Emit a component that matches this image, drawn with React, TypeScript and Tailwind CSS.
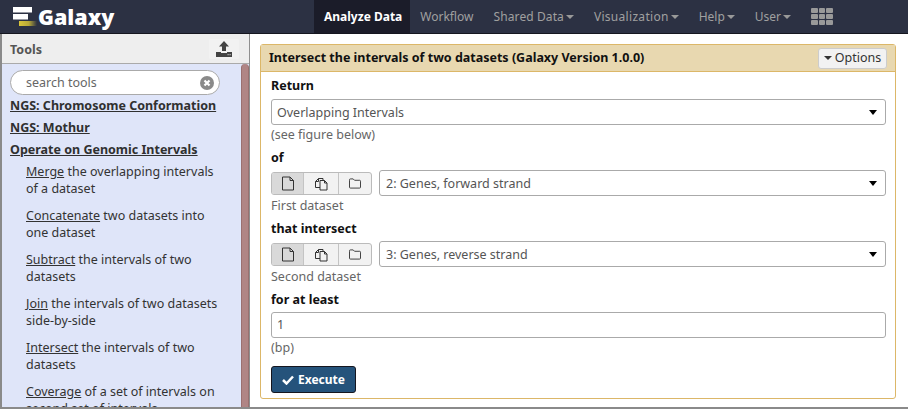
import React from "react";

const font = "font-['Noto_Sans',sans-serif]";

function Caret({ className = "border-t-[#8a8a8a]" }: { className?: string }) {
  return <span className={`inline-block w-0 h-0 border-x-[4px] border-x-transparent border-t-[4px] ${className}`} />;
}

function NavItem({ label, caret, active, labelClass = "" }: { label: string; caret?: boolean; active?: boolean; labelClass?: string }) {
  return (
    <div className={`h-full flex items-center ${active ? "pl-[10px] pr-[8px] bg-[#1b1c29] text-white font-bold" : "px-[10px] text-[#a0a0a0]"}`}>
      <span className={labelClass}>{label}</span>
      {caret && <Caret className="border-t-[#999999] mt-[1px] ml-[2px]" />}
    </div>
  );
}

function Tool({ link, rest }: { link: string; rest: React.ReactNode }) {
  return (
    <div className="pl-[16px] text-[12.5px] leading-[17px] text-[#333333] mb-[10px]">
      <span className="underline">{link}</span> {rest}
    </div>
  );
}

function Section({ children }: { children: React.ReactNode }) {
  return <div className="text-[12.5px] font-bold underline leading-[17px] text-[#303030] whitespace-nowrap">{children}</div>;
}

function DocIcon() {
  return (
    <svg width="12" height="15" viewBox="0 0 12 15" fill="none" stroke="#333" strokeWidth="1">
      <path d="M.5 1h7.500L11.500 4.500V14H.5z" strokeLinejoin="round" />
      <path d="M8 1v3.500h3.500" />
    </svg>
  );
}
function FilesIcon() {
  return (
    <svg width="14" height="14" viewBox="0 0 14 14" fill="none" stroke="#333" strokeWidth="1">
      <path d="M6 10.500H1.500V4.500L4.500 1.500H9V3.500" strokeLinejoin="round" />
      <path d="M4.500 1.500v3h-3" />
      <path d="M6 3.500h4.500L13 6v7H6z" strokeLinejoin="round" />
      <path d="M10.500 3.500V6H13" />
    </svg>
  );
}
function FolderIcon() {
  return (
    <svg width="14" height="11" viewBox="0 0 14 12" fill="none" stroke="#333" strokeWidth="1">
      <path d="M1 3V2q0-1 1-1h3l1.500 1.500H12q1 0 1 1V10q0 1-1 1H2q-1 0-1-1z" strokeLinejoin="round" />
    </svg>
  );
}

function SelectBox({ value, className = "" }: { value: string; className?: string }) {
  return (
    <div className={`h-[26px] border border-[#aaaaaa] rounded-[3px] bg-white flex items-center justify-between pl-[5px] pr-[8px] text-[#555555] text-[12.5px] ${className}`}>
      <span className="mt-[2px]">{value}</span>
      <Caret className="border-t-black border-x-[4.500px] border-t-[5px]" />
    </div>
  );
}

function DataRow({ value, hint }: { value: string; hint: string }) {
  return (
    <>
      <div className="flex gap-[7px] mt-[4px]">
        <div className="flex h-[23px] w-[101px] mt-[2px] border border-[#bbbbbb] rounded-[3px] overflow-hidden bg-[#f2f2f2]">
          <div className="w-[32px] flex items-center justify-center bg-[#d9d9d9] border-r border-[#c4c4c4]"><DocIcon /></div>
          <div className="w-[35px] flex items-center justify-center border-r border-[#c4c4c4]"><FilesIcon /></div>
          <div className="flex-1 flex items-center justify-center"><FolderIcon /></div>
        </div>
        <SelectBox value={value} className="flex-1 pl-[6px]" />
      </div>
      <div className="text-[#666666] text-[12.5px] leading-[17px] mt-[1px]">{hint}</div>
    </>
  );
}

function Label({ children, className = "" }: { children: React.ReactNode; className?: string }) {
  return <div className={`font-bold text-[12.5px] leading-[17px] text-[#111111] ${className}`}>{children}</div>;
}

export default function App() {
  return (
    <div className={`w-[908px] h-[409px] overflow-hidden flex flex-col bg-white ${font}`}>
      <header className="h-[34px] shrink-0 bg-[#2c3143] border-b border-[#15161f] flex text-[12px]">
        <div className="w-[314px] flex items-center pl-[13px] shrink-0">
          <svg width="24" height="20" viewBox="0 0 24 20" className="mt-[1px] -mr-[1px]">
            <defs>
              <linearGradient id="g" x1="0" x2="1" y1="0" y2="0">
                <stop offset="0" stopColor="#d9c53a" />
                <stop offset="0.55" stopColor="#b8a838" />
                <stop offset="1" stopColor="#2c3143" />
              </linearGradient>
            </defs>
            <rect x="0" y="0" width="19" height="5.500" fill="#fff" />
            <rect x="0" y="7" width="15" height="5.500" fill="#fff" />
            <rect x="6" y="14" width="18" height="5" fill="url(#g)" />
          </svg>
          <span className="text-white font-extrabold text-[21.5px] leading-none font-['Open_Sans',sans-serif] ml-[2px]">Galaxy</span>
        </div>
        <NavItem label="Analyze Data" active />
        <NavItem label="Workflow" />
        <NavItem label="Shared Data" caret labelClass="tracking-[0.1px]" />
        <NavItem label="Visualization" caret labelClass="tracking-[0.3px]" />
        <NavItem label="Help" caret />
        <NavItem label="User" caret />
        <div className="grid grid-cols-3 gap-[1px] ml-[10px] mt-[8px] h-[17px] w-[22px] content-start">
          {Array.from({ length: 9 }).map((_, i) => (
            <span key={i} className="h-[5px] bg-[#999999] rounded-[1px]" />
          ))}
        </div>
      </header>
      <div className="flex flex-1 min-h-0">
        <aside className="w-[250px] shrink-0 flex flex-col border-l-2 border-l-[#8a8a8a] border-r border-r-[#8f8f8f]">
          <div className="h-[30px] shrink-0 bg-[#eeeeee] border-b border-[#aaaaaa] flex items-center justify-between pl-[8px] pr-[10px]">
            <span className="font-bold text-[12.5px] text-[#555555] mt-[3px]">Tools</span>
            <div className="w-[30px] h-[20px] bg-[#f2f2f2] rounded-[2px] flex items-center justify-center">
              <svg width="16" height="16" viewBox="0 0 16 16" fill="#444">
                <path d="M8 0l5 5.500h-3V10H6V5.500H3z" />
                <path d="M0 11h5v1h6v-1h5v5H0z" />
                <rect x="11.500" y="13.200" width="1.200" height="1" fill="#ddd" />
                <rect x="13.500" y="13.200" width="1.200" height="1" fill="#ddd" />
              </svg>
            </div>
          </div>
          <div className="flex flex-1 min-h-0 bg-[#dfe5f9]">
            <div className="flex-1 min-w-0 overflow-hidden pl-[8px] pt-[6px] pr-[13px]">
              <div className="h-[25px] w-[210px] bg-white border border-[#aaaaaa] rounded-full flex items-center justify-between pl-[15px] pr-[5px] text-[12.5px] text-[#666666] mb-[2px]">
                <span className="mt-[1px]">search tools</span>
                <svg width="14" height="14" viewBox="0 0 14 14">
                  <circle cx="7" cy="7" r="7" fill="#8a8a8a" />
                  <path d="M4.500 4.500l5 5M9.500 4.500l-5 5" stroke="#fff" strokeWidth="2.200" />
                </svg>
              </div>
              <Section>NGS: Chromosome Conformation</Section>
              <div className="h-[5px]" />
              <Section>NGS: Mothur</Section>
              <div className="h-[5px]" />
              <Section>Operate on Genomic Intervals</Section>
              <div className="h-[5px]" />
              <Tool link="Merge" rest="the overlapping intervals of a dataset" />
              <Tool link="Concatenate" rest="two datasets into one dataset" />
              <Tool link="Subtract" rest="the intervals of two datasets" />
              <Tool link="Join" rest="the intervals of two datasets side-by-side" />
              <Tool link="Intersect" rest="the intervals of two datasets" />
              <Tool link="Coverage" rest="of a set of intervals on second set of intervals" />
            </div>
            <div className="w-[8px] shrink-0 bg-[#b08585] rounded-t-[4px] border-x border-[#9a7070]" />
          </div>
        </aside>
        <main className="flex-1 min-w-0 pl-[10px] pr-[12px] pt-[10px]">
          <div className="border border-[#dcb768] rounded-[3px] h-[355px] flex flex-col">
            <div className="h-[27px] shrink-0 bg-[#e8d8b0] border-b border-[#dcb768] flex items-center justify-between pl-[8px] pr-[8px]">
              <span className="font-bold text-[12.5px] text-[#111111]">Intersect the intervals of two datasets (Galaxy Version 1.0.0)</span>
              <div className="h-[21px] w-[69px] bg-[#f2f2f2] border border-[#cccccc] rounded-[3px] flex items-center justify-center gap-[3px] text-[12.5px] text-[#333333]">
                <Caret className="border-t-[#333333]" />
                <span>Options</span>
              </div>
            </div>
            <div className="pl-[10px] pr-[9px] pt-[5px] flex-1">
              <Label>Return</Label>
              <SelectBox value="Overlapping Intervals" className="mt-[5px]" />
              <div className="text-[#666666] text-[12.5px] leading-[17px] mt-[1px]">(see figure below)</div>
              <Label className="mt-[6px]">of</Label>
              <DataRow value="2: Genes, forward strand" hint="First dataset" />
              <Label className="mt-[6px]">that intersect</Label>
              <DataRow value="3: Genes, reverse strand" hint="Second dataset" />
              <Label className="mt-[6px]">for at least</Label>
              <div className="h-[26px] mt-[4px] border border-[#aaaaaa] rounded-[3px] bg-white flex items-center pl-[5px] text-[#555555] text-[12.5px]"><span className="mt-[1px]">1</span></div>
              <div className="text-[#666666] text-[12.5px] leading-[17px] mt-[1px]">(bp)</div>
              <div className="mt-[10px] h-[27px] w-[85px] bg-[#25537b] border border-[#15161f] rounded-[3px] flex items-center justify-center gap-[4px] text-white font-bold text-[12px]">
                <svg width="12" height="10" viewBox="0 0 12 10" fill="none" stroke="#fff" strokeWidth="2.500"><path d="M1 5l3.500 3.500L11 1.500" /></svg>
                <span>Execute</span>
              </div>
            </div>
          </div>
        </main>
      </div>
      <div className="h-[2px] shrink-0 bg-[#8a8a8a]" />
    </div>
  );
}
